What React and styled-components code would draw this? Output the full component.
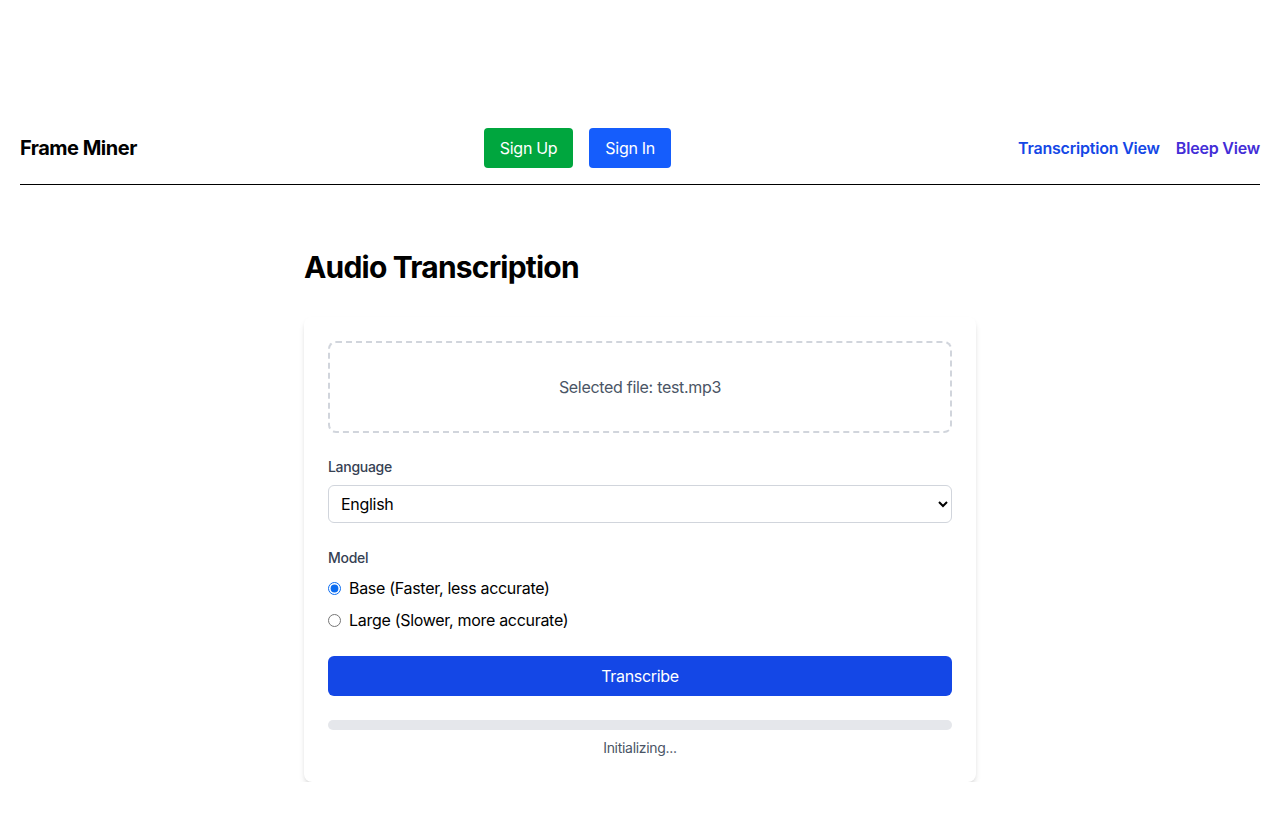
import React from 'react';
import styled, { createGlobalStyle } from 'styled-components';

const GlobalStyle = createGlobalStyle`
  * { box-sizing: border-box; }
  body {
    margin: 0;
    background: #ffffff;
    font-family: Inter, "Noto Sans", "Liberation Sans", sans-serif;
    letter-spacing: -0.3px;
    color: #000;
  }
`;

const Page = styled.div`
  padding-top: 128px;
`;

const Header = styled.header`
  display: flex;
  align-items: center;
  justify-content: space-between;
  margin: 0 20px;
  padding-bottom: 16px;
  border-bottom: 1px solid #000;
`;

const Brand = styled.div`
  font-size: 20px;
  font-weight: 700;
  line-height: 28px;
  letter-spacing: -0.5px;
`;

const AuthGroup = styled.div`
  display: flex;
  gap: 16px;
`;

const AuthButton = styled.button`
  height: 40px;
  padding: 0 16px;
  border: none;
  border-radius: 4px;
  background: ${p => p.$bg};
  color: #fff;
  font-family: inherit;
  letter-spacing: inherit;
  font-size: 16px;
  cursor: pointer;
`;

const Links = styled.nav`
  display: flex;
  gap: 16px;
`;

const NavLink = styled.a`
  color: ${p => p.$color};
  font-size: 16px;
  font-weight: 600;
  letter-spacing: -0.2px;
  text-decoration: none;
  line-height: 24px;
`;

const Main = styled.main`
  max-width: 672px;
  margin: 64px auto 0;
`;

const Title = styled.h1`
  margin: 0 0 32px;
  font-size: 30px;
  line-height: 36px;
  font-weight: 700;
  letter-spacing: -0.8px;
`;

const Card = styled.div`
  background: #fff;
  border-radius: 8px;
  box-shadow: 0 4px 6px -1px rgba(0, 0, 0, 0.12), 0 2px 4px -2px rgba(0, 0, 0, 0.12);
  padding: 24px;
`;

const DropZone = styled.div`
  border: 2px dashed #d1d5dc;
  border-radius: 8px;
  padding: 32px;
  text-align: center;
  color: #4a5565;
  font-size: 16px;
  line-height: 24px;
  margin-bottom: 24px;
`;

const Field = styled.div`
  margin-bottom: ${p => p.$gap || 24}px;
`;

const Label = styled.div`
  font-size: 14px;
  line-height: 20px;
  font-weight: 500;
  color: #364153;
  margin-bottom: 8px;
`;

const Select = styled.select`
  width: 100%;
  height: 38px;
  padding: 0 8px;
  border: 1px solid #d1d5dc;
  border-radius: 6px;
  background: #fff;
  font-family: inherit;
  letter-spacing: inherit;
  font-size: 16px;
  color: #000;
`;

const RadioRow = styled.label`
  display: flex;
  align-items: center;
  gap: 8px;
  font-size: 16px;
  line-height: 24px;
  & + & { margin-top: 8px; }
  input {
    margin: 0;
    width: 13px;
    height: 13px;
    accent-color: #0b6cf0;
  }
`;

const PrimaryButton = styled.button`
  width: 100%;
  height: 40px;
  border: none;
  border-radius: 6px;
  background: #1447e6;
  color: #fff;
  font-family: inherit;
  letter-spacing: inherit;
  font-size: 16px;
  cursor: pointer;
  margin-bottom: 24px;
`;

const Track = styled.div`
  height: 10px;
  border-radius: 9999px;
  background: #e5e7eb;
  overflow: hidden;
`;

const Status = styled.div`
  margin-top: 8px;
  text-align: center;
  font-size: 14px;
  line-height: 20px;
  color: #4a5565;
`;

export default function App() {
  return (
    <Page>
      <GlobalStyle />
      <Header>
        <Brand>Frame Miner</Brand>
        <AuthGroup>
          <AuthButton $bg="#00a63e">Sign Up</AuthButton>
          <AuthButton $bg="#155dfc">Sign In</AuthButton>
        </AuthGroup>
        <Links>
          <NavLink href="#" $color="#1447e6">Transcription View</NavLink>
          <NavLink href="#" $color="#432dd7">Bleep View</NavLink>
        </Links>
      </Header>
      <Main>
        <Title>Audio Transcription</Title>
        <Card>
          <DropZone>Selected file: test.mp3</DropZone>
          <Field $gap={25}>
            <Label>Language</Label>
            <Select defaultValue="en">
              <option value="en">English</option>
              <option value="es">Spanish</option>
              <option value="fr">French</option>
            </Select>
          </Field>
          <Field>
            <Label>Model</Label>
            <RadioRow>
              <input type="radio" name="model" defaultChecked />
              Base (Faster, less accurate)
            </RadioRow>
            <RadioRow>
              <input type="radio" name="model" />
              Large (Slower, more accurate)
            </RadioRow>
          </Field>
          <PrimaryButton>Transcribe</PrimaryButton>
          <Track />
          <Status>Initializing...</Status>
        </Card>
      </Main>
    </Page>
  );
}
